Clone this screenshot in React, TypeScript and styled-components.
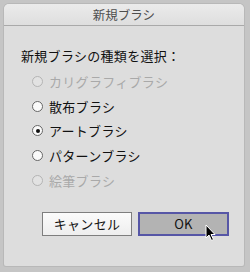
import React from 'react'
import styled, { createGlobalStyle } from 'styled-components'

const GlobalStyle = createGlobalStyle`
  html, body {
    margin: 0;
    padding: 0;
    background: #c5c5c5;
  }
  body {
    font-family: "Noto Sans CJK JP", "Liberation Sans", sans-serif;
  }
`

const Screen = styled.div`
  width: 250px;
  height: 272px;
  padding: 4px 6px 6px 4px;
  box-sizing: border-box;
  position: relative;
`

const Window = styled.div`
  width: 240px;
  height: 262px;
  background: #dddddd;
  border-radius: 5px 5px 2px 2px;
  box-shadow: 0 0 0 1px #b8b8b8;
  display: flex;
  flex-direction: column;
  overflow: hidden;
`

const TitleBar = styled.div`
  height: 21px;
  flex: none;
  background: linear-gradient(#ebebeb, #dedede);
  border-bottom: 1px solid #a9a9a9;
  display: flex;
  align-items: center;
  justify-content: center;
  font-size: 12.5px;
  color: #4e4e4e;
`

const Body = styled.div`
  flex: 1;
  padding: 21px 15px 0 17px;
  display: flex;
  flex-direction: column;
`

const Prompt = styled.div`
  font-size: 13px;
  line-height: 17px;
  color: #111;
  letter-spacing: 0.3px;
`

const RadioList = styled.div`
  margin: 5px 0 0 11px;
  display: flex;
  flex-direction: column;
`

const RadioRow = styled.div<{ $disabled?: boolean }>`
  height: 24.8px;
  display: flex;
  align-items: center;
  gap: 6px;
  font-size: 13px;
  letter-spacing: 0.3px;
  color: ${({ $disabled }) => ($disabled ? '#a9a9a9' : '#111')};
`

const Circle = styled.span<{ $disabled?: boolean; $checked?: boolean }>`
  width: 11px;
  height: 11px;
  box-sizing: border-box;
  border-radius: 50%;
  border: 1px solid ${({ $disabled }) => ($disabled ? '#b4b4b4' : '#666')};
  background: ${({ $disabled }) => ($disabled ? '#e2e2e2' : '#fafafa')};
  display: flex;
  align-items: center;
  justify-content: center;
  flex: none;

  &::after {
    content: '';
    width: 4px;
    height: 4px;
    border-radius: 50%;
    background: #111;
    display: ${({ $checked }) => ($checked ? 'block' : 'none')};
  }
`

const ButtonRow = styled.div`
  margin-top: 19px;
  display: flex;
  justify-content: flex-end;
  gap: 6px;
`

const Button = styled.div<{ $primary?: boolean }>`
  height: 24px;
  box-sizing: border-box;
  display: flex;
  align-items: center;
  justify-content: center;
  font-size: 13px;
  letter-spacing: 0.3px;
  color: #111;
  width: ${({ $primary }) => ($primary ? '91px' : '90px')};
  border: ${({ $primary }) => ($primary ? '2px solid #5656a6' : '1px solid #7e7e7e')};
  background: ${({ $primary }) => ($primary ? '#b3b3b3' : 'linear-gradient(#fbfbfb, #eeeeee)')};
`

const Cursor = styled.svg`
  position: absolute;
  left: 205px;
  top: 224px;
`

const options = [
  { label: 'カリグラフィブラシ', disabled: true },
  { label: '散布ブラシ' },
  { label: 'アートブラシ', checked: true },
  { label: 'パターンブラシ' },
  { label: '絵筆ブラシ', disabled: true },
]

export default function App() {
  return (
    <>
      <GlobalStyle />
      <Screen>
        <Window>
          <TitleBar>新規ブラシ</TitleBar>
          <Body>
            <Prompt>新規ブラシの種類を選択：</Prompt>
            <RadioList>
              {options.map(o => (
                <RadioRow key={o.label} $disabled={o.disabled}>
                  <Circle $disabled={o.disabled} $checked={o.checked} />
                  {o.label}
                </RadioRow>
              ))}
            </RadioList>
            <ButtonRow>
              <Button>キャンセル</Button>
              <Button $primary>OK</Button>
            </ButtonRow>
          </Body>
        </Window>
        <Cursor width="12" height="18" viewBox="0 0 12 18">
          <path d="M1 1 L1 14 L4 11 L6.5 16.5 L8.5 15.5 L6 10.5 L10 10.5 Z" fill="#000" stroke="#fff" strokeWidth="1" />
        </Cursor>
      </Screen>
    </>
  )
}
